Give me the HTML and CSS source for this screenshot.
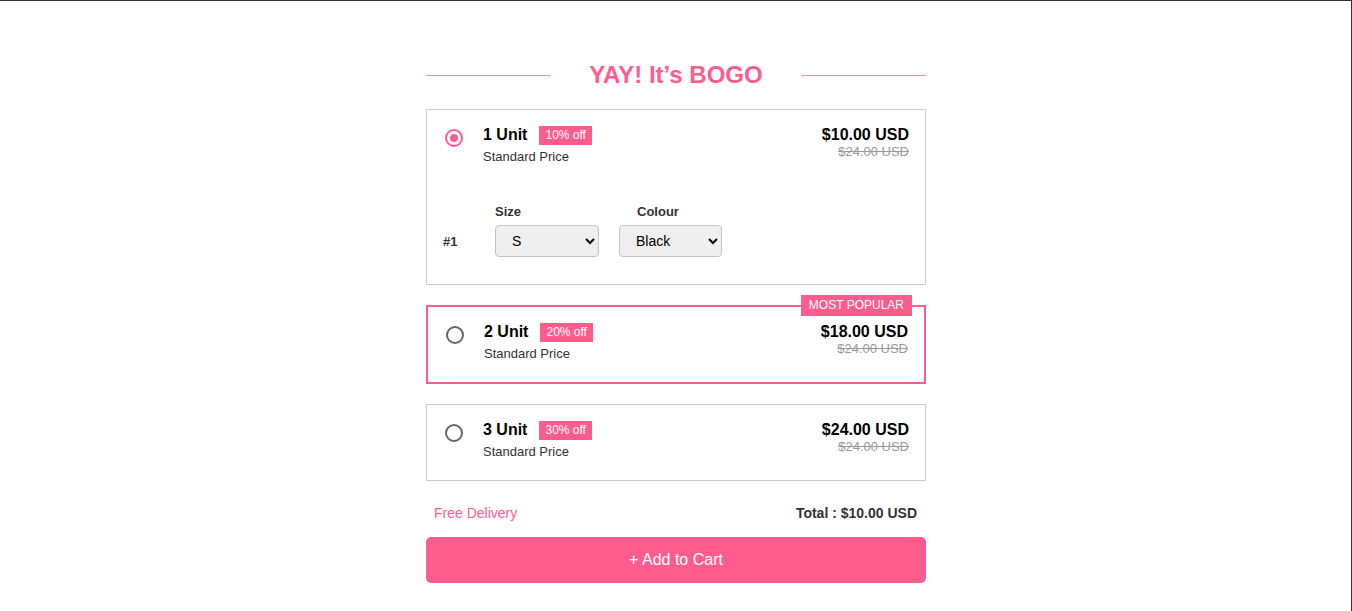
FILE: index.html
```html
<!DOCTYPE html>
<html lang="en">
<head>
<meta charset="utf-8">
<title>BOGO</title>
<link rel="stylesheet" href="styles.css">
</head>
<body>
<div class="page">
  <div class="bogo">
    <div class="heading">
      <span class="heading-line"></span>
      <h1 class="heading-text">YAY! It’s BOGO</h1>
      <span class="heading-line"></span>
    </div>

    <div class="option option-selected">
      <div class="option-row">
        <span class="radio radio-on"></span>
        <div class="option-info">
          <div class="option-title"><span class="unit">1 Unit</span><span class="badge">10% off</span></div>
          <div class="option-sub">Standard Price</div>
        </div>
        <div class="option-price">
          <div class="price">$10.00 USD</div>
          <div class="price-old">$24.00 USD</div>
        </div>
      </div>
      <div class="variants">
        <span></span>
        <span class="variant-label">Size</span>
        <span class="variant-label variant-label-colour">Colour</span>
        <span class="variant-num">#1</span>
        <select class="variant-select variant-size"><option>S</option><option>M</option><option>L</option></select>
        <select class="variant-select variant-colour"><option>Black</option><option>White</option></select>
      </div>
    </div>

    <div class="option option-popular">
      <span class="popular-badge">MOST POPULAR</span>
      <div class="option-row">
        <span class="radio"></span>
        <div class="option-info">
          <div class="option-title"><span class="unit">2 Unit</span><span class="badge">20% off</span></div>
          <div class="option-sub">Standard Price</div>
        </div>
        <div class="option-price">
          <div class="price">$18.00 USD</div>
          <div class="price-old">$24.00 USD</div>
        </div>
      </div>
    </div>

    <div class="option">
      <div class="option-row">
        <span class="radio"></span>
        <div class="option-info">
          <div class="option-title"><span class="unit">3 Unit</span><span class="badge">30% off</span></div>
          <div class="option-sub">Standard Price</div>
        </div>
        <div class="option-price">
          <div class="price">$24.00 USD</div>
          <div class="price-old">$24.00 USD</div>
        </div>
      </div>
    </div>

    <div class="summary">
      <span class="delivery">Free Delivery</span>
      <span class="total">Total : $10.00 USD</span>
    </div>
    <button class="cart-btn">+ Add to Cart</button>
  </div>
</div>
</body>
</html>
```

FILE: styles.css
```css
* { box-sizing: border-box; }
html, body { margin: 0; padding: 0; background: #fff; }
body { font-family: "Liberation Sans", Arial, sans-serif; color: #000; }

.page {
  min-height: 100vh;
  padding-top: 61px;
  box-shadow: inset -1px 1px 0 #333;
}

.bogo {
  width: 500px;
  margin: 0 auto;
  display: flex;
  flex-direction: column;
}

.heading {
  display: flex;
  align-items: center;
  margin-bottom: 20px;
}
.heading-line {
  width: 125px;
  height: 1px;
  background: #e08ec8;
}
.heading-text {
  flex: 1;
  margin: 0;
  text-align: center;
  font-size: 24px;
  line-height: 28px;
  font-weight: bold;
  color: #ff5c8e;
}

.option {
  position: relative;
  border: 1px solid #cccccc;
  padding: 15px 16px 20px 18px;
  margin-bottom: 20px;
}
.option-popular {
  border: 2px solid #ff5c8e;
  padding: 15px 16px 20px 18px;
}

.option-row {
  display: flex;
  align-items: flex-start;
}

.radio {
  flex: none;
  width: 18px;
  height: 18px;
  border: 2px solid #666;
  border-radius: 50%;
  margin-top: 4px;
  margin-right: 20px;
  position: relative;
}
.radio-on {
  border-color: #ff5c8e;
}
.radio-on::after {
  content: "";
  position: absolute;
  left: 3px;
  top: 3px;
  width: 8px;
  height: 8px;
  border-radius: 50%;
  background: #ff5c8e;
}

.option-info { flex: 1; }
.option-title {
  display: flex;
  align-items: center;
  height: 19px;
}
.unit {
  font-size: 16px;
  line-height: 18px;
  font-weight: bold;
  margin-right: 12px;
}
.badge {
  background: #ff5c8e;
  color: #fff;
  font-size: 12px;
  line-height: 15px;
  padding: 2px 6px;
  margin-top: 1px;
}
.option-sub {
  margin-top: 5px;
  font-size: 13px;
  line-height: 16px;
  color: #333;
}

.option-price { text-align: right; padding-top: 1px; }
.price {
  font-size: 16px;
  line-height: 18px;
  font-weight: bold;
}
.price-old {
  font-size: 13px;
  line-height: 16px;
  color: #999;
  text-decoration: line-through;
}

.popular-badge {
  position: absolute;
  top: -12px;
  right: 12px;
  background: #ff5c8e;
  color: #fff;
  font-size: 12px;
  line-height: 15px;
  padding: 3px 8px;
}

.variants {
  display: grid;
  grid-template-columns: 32px 104px 103px;
  column-gap: 20px;
  row-gap: 5px;
  align-items: center;
  margin-top: 39px;
  margin-left: -2px;
  margin-bottom: 7px;
}
.variant-label {
  font-size: 13px;
  line-height: 16px;
  font-weight: bold;
  color: #333;
}
.variant-label-colour { padding-left: 18px; }
.variant-num {
  font-size: 13px;
  font-weight: bold;
  color: #333;
}
.variant-select {
  height: 32px;
  width: 100%;
  font-family: "Liberation Sans", Arial, sans-serif;
  font-size: 14px;
  color: #000;
  background: #efefef;
  border: 1px solid #c4c4c4;
  border-radius: 4px;
  padding: 0 6px 0 12px;
}

.summary {
  display: flex;
  justify-content: space-between;
  padding: 4px 9px 0 8px;
  font-size: 14px;
  line-height: 16px;
  margin-bottom: 16px;
}
.delivery { color: #ff5c8e; }
.total { font-weight: bold; color: #333; }

.cart-btn {
  height: 46px;
  width: 100%;
  border: 0;
  border-radius: 5px;
  background: #ff5c8e;
  color: #fff;
  font-family: "Liberation Sans", Arial, sans-serif;
  font-size: 16px;
  cursor: pointer;
}
```
